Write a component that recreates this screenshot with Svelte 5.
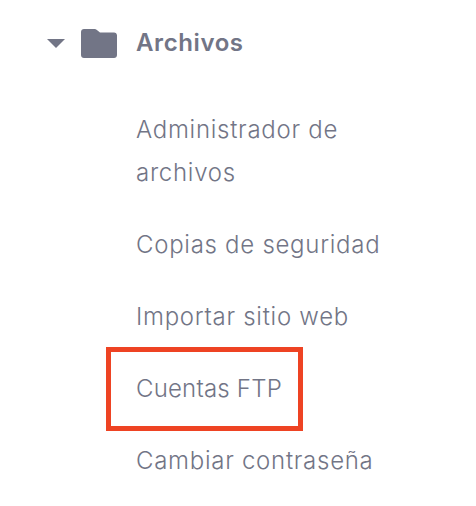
<script lang="ts">
  const links = [
    { label: 'Administrador de archivos' },
    { label: 'Copias de seguridad' },
    { label: 'Importar sitio web' },
    { label: 'Cuentas FTP', marked: true },
    { label: 'Cambiar contraseña' }
  ];
</script>

<nav class="menu">
  <div class="head">
    <svg class="caret" width="18" height="9" viewBox="0 0 18 9" aria-hidden="true">
      <path d="M0 0h18L9 9z" />
    </svg>
    <svg class="folder" width="36" height="29" viewBox="0 0 36 29" aria-hidden="true">
      <path d="M3 0h10.500c1 0 1.700.4 2.400 1L19 3.500h14c1.700 0 3 1.300 3 3V26c0 1.700-1.300 3-3 3H3c-1.700 0-3-1.300-3-3V3C0 1.300 1.300 0 3 0z" />
    </svg>
    <span class="title">Archivos</span>
  </div>

  <ul>
    {#each links as link}
      <li class:marked={link.marked}>
        <span>{link.label}</span>
      </li>
    {/each}
  </ul>
</nav>

<style>
  :global(body) {
    background: #fff;
  }

  .menu {
    width: 476px;
    height: 506px;
    padding-top: 27px;
    box-sizing: border-box;
    font-family: Inter, "Noto Sans", sans-serif;
    color: #727586;
    overflow: hidden;
  }

  .head {
    display: flex;
    align-items: center;
    height: 32px;
    padding-left: 47px;
  }

  .caret {
    fill: #727586;
    margin-right: 16px;
  }

  .folder {
    fill: #727586;
    margin-right: 19px;
  }

  .title {
    font-size: 24px;
    font-weight: 600;
    letter-spacing: 0.6px;
    position: relative;
    top: -1px;
  }

  ul {
    list-style: none;
    margin: 49px 0 0;
    padding: 0 0 0 136px;
    width: 245px;
    display: flex;
    flex-direction: column;
    gap: 29px;
  }

  li {
    position: relative;
    font-size: 24px;
    line-height: 43px;
    font-weight: 350;
    letter-spacing: 0.72px;
  }

  li.marked {
    letter-spacing: 0.2px;
  }

  .marked::after {
    content: '';
    position: absolute;
    left: -30px;
    top: -20px;
    width: 187px;
    height: 74px;
    border: 5px solid #ee4323;
  }
</style>
